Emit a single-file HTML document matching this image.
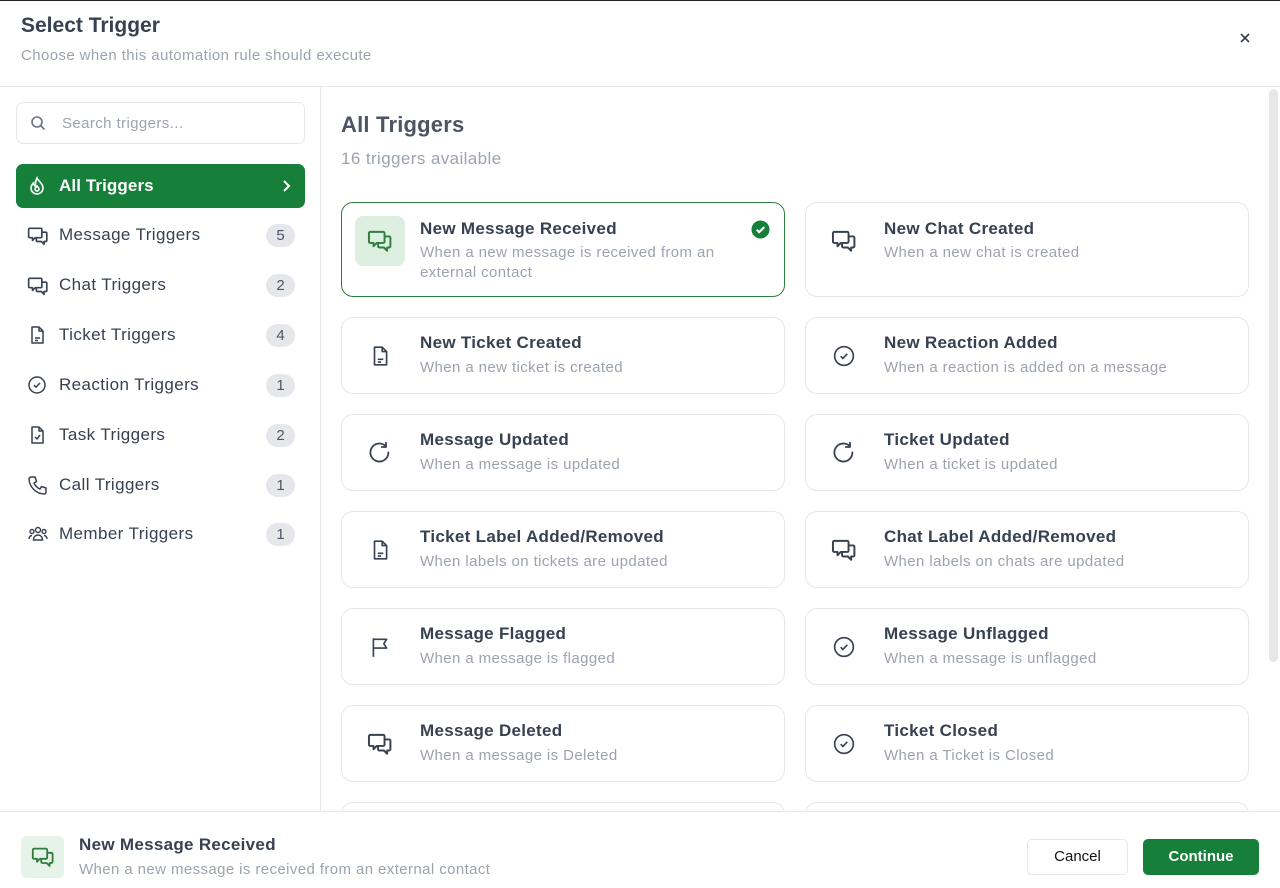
<!DOCTYPE html>
<html><head><meta charset="utf-8"><style>
*{box-sizing:border-box;margin:0;padding:0}
body{width:1280px;height:887px;overflow:hidden;background:#fff;font-family:"Liberation Sans",sans-serif;color:#374151;position:relative;border-top:1px solid #222;letter-spacing:0.4px}
.hdr{position:absolute;left:0;top:1px;width:1280px;height:85px;border-bottom:1px solid #e5e7eb}
.hdr h1{position:absolute;left:21px;top:12px;font-size:21px;font-weight:600;color:#374151;letter-spacing:0}
.hdr p{position:absolute;left:21px;top:45px;font-size:15px;color:#9ca3af}
.x{position:absolute;left:1238px;top:29px}
.side{position:absolute;left:0;top:86px;width:321px;height:724px;border-right:1px solid #e5e7eb}
.search{position:absolute;left:16px;top:15px;width:289px;height:42px;border:1px solid #e5e7eb;border-radius:7px}
.search span{position:absolute;left:45px;top:12px;font-size:15px;color:#9ca3af}
.search svg{position:absolute;left:13px;top:12px}
.item{position:absolute;left:16px;width:289px;height:44px;border-radius:7px;font-size:17px;color:#374151}
.item svg{position:absolute;left:11px;top:12px}
.item .t{position:absolute;left:43px;top:12px}
.item .b{position:absolute;right:10px;top:11px;width:29px;height:23px;border-radius:12px;background:#e5e7eb;text-align:center;font-size:15px;line-height:23px;color:#4b5563;letter-spacing:0}
.item.act{background:#16803a;color:#fff;font-weight:700;letter-spacing:0.1px}
.main{position:absolute;left:321px;top:86px;width:959px;height:724px;overflow:hidden}
.main h2{position:absolute;left:20px;top:25px;font-size:22px;font-weight:600;color:#4b5563;letter-spacing:0.2px}
.main .cnt{position:absolute;left:20px;top:62px;font-size:17px;color:#9ca3af}
.card{position:absolute;width:444px;border:1px solid #e5e7eb;border-radius:12px;background:#fff}
.card .ic{position:absolute;left:13px;width:50px;height:50px;display:flex;align-items:center;justify-content:center;border-radius:8px}
.card .tt{position:absolute;left:78px;font-size:17px;font-weight:600;color:#374151;letter-spacing:0.3px}
.card .dd{position:absolute;left:78px;font-size:15px;color:#9ca3af;line-height:20px;width:330px}
.sel{border-color:#2f7d3f}
.sel .ic{background:#dcefe1}
.scroll{position:absolute;left:1269px;top:88px;width:9px;height:573px;background:#e5e7eb;border-radius:5px}
.foot{position:absolute;left:0;top:810px;width:1280px;height:77px;border-top:1px solid #e5e7eb;background:#fff}
.foot .ic{position:absolute;left:21px;top:24px;width:43px;height:42px;border-radius:6px;background:#e6f3e9;display:flex;align-items:center;justify-content:center}
.foot .a{position:absolute;left:79px;top:23px;font-size:17px;font-weight:600;color:#374151;letter-spacing:0.3px}
.foot .b2{position:absolute;left:79px;top:49px;font-size:15px;color:#9ca3af}
.btn{position:absolute;top:27px;height:36px;border-radius:5px;font-size:15px;text-align:center;line-height:34px;letter-spacing:0}
.cancel{left:1027px;width:101px;border:1px solid #e5e7eb;color:#111}
.cont{left:1143px;width:116px;background:#16803a;color:#fff;font-weight:600;border:1px solid #16803a}
</style></head><body>
<div class="hdr"><h1>Select Trigger</h1><p>Choose when this automation rule should execute</p>
<svg class="x" width="14" height="14" viewBox="0 0 14 14"><path d="M3 3l8 8M11 3l-8 8" stroke="#374151" stroke-width="1.6"/></svg></div>

<div class="side">
<div class="search"><svg width="16" height="16" viewBox="0 0 16 16" fill="none" stroke="#6b7280" stroke-width="1.6"><circle cx="7" cy="7" r="5"/><path d="M11 11l3.5 3.5"/></svg><span>Search triggers...</span></div>
<div class="item act" style="top:77px"><svg width="20" height="20" viewBox="0 0 20 20" fill="none" stroke="#fff" stroke-width="1.6"><path d="M10 2c1 3 6 5 6 10a6 6 0 0 1-12 0c0-2.5 1.5-4 2.5-5 0 2 1 3 2 3C8 7 9 4 10 2z"/><path d="M10 15a2 2 0 0 1-2-2c0-1 1-2 2-3 .5 1 2 1.5 2 3a2 2 0 0 1-2 2z"/></svg><span class="t">All Triggers</span><svg style="left:auto;right:14px;top:15px" width="10" height="14" viewBox="0 0 10 14" fill="none" stroke="#fff" stroke-width="2"><path d="M3 2l5 5-5 5"/></svg></div>
<div class="item" style="top:126px"><svg width="22" height="22" viewBox="0 0 20 20" fill="none" stroke="#374151" stroke-width="1.5" stroke-linejoin="round"><path d="M2.5 3h10a1 1 0 0 1 1 1v6.5a1 1 0 0 1-1 1H7.5L5 14v-2.5H2.5a1 1 0 0 1-1-1V4a1 1 0 0 1 1-1z"/><path d="M13.5 6.5h3.5a1 1 0 0 1 1 1V14a1 1 0 0 1-1 1h-1.5v2.5L13 15H9.5a1 1 0 0 1-1-1v-2.5"/></svg><span class="t">Message Triggers</span><span class="b">5</span></div>
<div class="item" style="top:176px"><svg width="22" height="22" viewBox="0 0 20 20" fill="none" stroke="#374151" stroke-width="1.5" stroke-linejoin="round"><path d="M2.5 3h10a1 1 0 0 1 1 1v6.5a1 1 0 0 1-1 1H7.5L5 14v-2.5H2.5a1 1 0 0 1-1-1V4a1 1 0 0 1 1-1z"/><path d="M13.5 6.5h3.5a1 1 0 0 1 1 1V14a1 1 0 0 1-1 1h-1.5v2.5L13 15H9.5a1 1 0 0 1-1-1v-2.5"/></svg><span class="t">Chat Triggers</span><span class="b">2</span></div>
<div class="item" style="top:226px"><svg width="20" height="20" viewBox="0 0 20 20" fill="none" stroke="#374151" stroke-width="1.5" stroke-linejoin="round"><path d="M5 2h7l4 4v12H5z"/><path d="M12 2v4h4M8 13h5M8 15.5h3"/></svg><span class="t">Ticket Triggers</span><span class="b">4</span></div>
<div class="item" style="top:276px"><svg width="20" height="20" viewBox="0 0 20 20" fill="none" stroke="#374151" stroke-width="1.5"><circle cx="10" cy="10" r="8"/><path d="M7 10.2l2 2 4-4.2"/></svg><span class="t">Reaction Triggers</span><span class="b">1</span></div>
<div class="item" style="top:326px"><svg width="20" height="20" viewBox="0 0 20 20" fill="none" stroke="#374151" stroke-width="1.5" stroke-linejoin="round"><path d="M5 2h7l4 4v12H5z"/><path d="M12 2v4h4M8 12l2 2 3-4"/></svg><span class="t">Task Triggers</span><span class="b">2</span></div>
<div class="item" style="top:376px"><svg width="22" height="22" viewBox="0 0 22 22" fill="none" stroke="#374151" stroke-width="1.5" stroke-linejoin="round"><path d="M4 2h4l1.5 4.5-2.5 1.5a11 11 0 0 0 6 6l1.5-2.5L19 13v4a2 2 0 0 1-2 2A16 16 0 0 1 2 4a2 2 0 0 1 2-2z"/></svg><span class="t">Call Triggers</span><span class="b">1</span></div>
<div class="item" style="top:425px"><svg width="22" height="20" viewBox="0 0 22 20" fill="none" stroke="#374151" stroke-width="1.4"><circle cx="11" cy="6" r="2.5"/><circle cx="5" cy="7.5" r="2"/><circle cx="17" cy="7.5" r="2"/><path d="M6.5 16c0-3 2-5 4.5-5s4.5 2 4.5 5zM2 15c0-2 1.3-3.5 3-3.5M20 15c0-2-1.3-3.5-3-3.5"/></svg><span class="t">Member Triggers</span><span class="b">1</span></div>
</div>

<div class="main">
<h2>All Triggers</h2><div class="cnt">16 triggers available</div>
</div>
<div class="scroll"></div>

<div style="position:absolute;left:0;top:0;width:1280px;height:810px;overflow:hidden;pointer-events:none">
<div class="card sel" style="left:341px;top:201px;height:95px"><div class="ic" style="top:13px"><svg width="26" height="26" viewBox="0 0 20 20" fill="none" stroke="#2f7d3f" stroke-width="1.5" stroke-linejoin="round"><path d="M2.5 3h10a1 1 0 0 1 1 1v6.5a1 1 0 0 1-1 1H7.5L5 14v-2.5H2.5a1 1 0 0 1-1-1V4a1 1 0 0 1 1-1z"/><path d="M13.5 6.5h3.5a1 1 0 0 1 1 1V14a1 1 0 0 1-1 1h-1.5v2.5L13 15H9.5a1 1 0 0 1-1-1v-2.5"/></svg></div><div class="tt" style="top:16px">New Message Received</div><div class="dd" style="top:40px">When a new message is received from an external contact</div>
<svg style="position:absolute;left:409px;top:17px" width="19" height="19" viewBox="0 0 20 20"><circle cx="10" cy="10" r="9.5" fill="#16803a"/><path d="M6 10.3l2.6 2.5L14 7.5" stroke="#fff" stroke-width="2.2" fill="none"/></svg></div>

<div class="card" style="left:805px;top:201px;height:95px"><div class="ic" style="top:13px"><svg width="26" height="26" viewBox="0 0 20 20" fill="none" stroke="#374151" stroke-width="1.5" stroke-linejoin="round"><path d="M2.5 3h10a1 1 0 0 1 1 1v6.5a1 1 0 0 1-1 1H7.5L5 14v-2.5H2.5a1 1 0 0 1-1-1V4a1 1 0 0 1 1-1z"/><path d="M13.5 6.5h3.5a1 1 0 0 1 1 1V14a1 1 0 0 1-1 1h-1.5v2.5L13 15H9.5a1 1 0 0 1-1-1v-2.5"/></svg></div><div class="tt" style="top:16px">New Chat Created</div><div class="dd" style="top:40px">When a new chat is created</div></div>

<div class="card" style="left:341px;top:316px;height:77px"><div class="ic" style="top:13px"><svg width="22" height="22" viewBox="0 0 20 20" fill="none" stroke="#374151" stroke-width="1.5" stroke-linejoin="round"><path d="M5 2h7l4 4v12H5z"/><path d="M12 2v4h4M8 13h5M8 15.5h3"/></svg></div><div class="tt" style="top:15px">New Ticket Created</div><div class="dd" style="top:40px">When a new ticket is created</div></div>
<div class="card" style="left:805px;top:316px;height:77px"><div class="ic" style="top:13px"><svg width="22" height="22" viewBox="0 0 20 20" fill="none" stroke="#374151" stroke-width="1.5"><circle cx="10" cy="10" r="8.5"/><path d="M7 10.2l2 2 4-4.2"/></svg></div><div class="tt" style="top:15px">New Reaction Added</div><div class="dd" style="top:40px">When a reaction is added on a message</div></div>

<div class="card" style="left:341px;top:413px;height:77px"><div class="ic" style="top:13px"><svg width="24" height="24" viewBox="0 0 20 20" fill="none" stroke="#374151" stroke-width="1.5" stroke-linecap="round"><path d="M17 9.5A7.5 7.5 0 1 1 14.5 4"/><path d="M15 1.5V5h-3.5" stroke-linejoin="round"/></svg></div><div class="tt" style="top:15px">Message Updated</div><div class="dd" style="top:40px">When a message is updated</div></div>
<div class="card" style="left:805px;top:413px;height:77px"><div class="ic" style="top:13px"><svg width="24" height="24" viewBox="0 0 20 20" fill="none" stroke="#374151" stroke-width="1.5" stroke-linecap="round"><path d="M17 9.5A7.5 7.5 0 1 1 14.5 4"/><path d="M15 1.5V5h-3.5" stroke-linejoin="round"/></svg></div><div class="tt" style="top:15px">Ticket Updated</div><div class="dd" style="top:40px">When a ticket is updated</div></div>

<div class="card" style="left:341px;top:510px;height:77px"><div class="ic" style="top:13px"><svg width="22" height="22" viewBox="0 0 20 20" fill="none" stroke="#374151" stroke-width="1.5" stroke-linejoin="round"><path d="M5 2h7l4 4v12H5z"/><path d="M12 2v4h4M8 13h5M8 15.5h3"/></svg></div><div class="tt" style="top:15px">Ticket Label Added/Removed</div><div class="dd" style="top:40px">When labels on tickets are updated</div></div>
<div class="card" style="left:805px;top:510px;height:77px"><div class="ic" style="top:13px"><svg width="26" height="26" viewBox="0 0 20 20" fill="none" stroke="#374151" stroke-width="1.5" stroke-linejoin="round"><path d="M2.5 3h10a1 1 0 0 1 1 1v6.5a1 1 0 0 1-1 1H7.5L5 14v-2.5H2.5a1 1 0 0 1-1-1V4a1 1 0 0 1 1-1z"/><path d="M13.5 6.5h3.5a1 1 0 0 1 1 1V14a1 1 0 0 1-1 1h-1.5v2.5L13 15H9.5a1 1 0 0 1-1-1v-2.5"/></svg></div><div class="tt" style="top:15px">Chat Label Added/Removed</div><div class="dd" style="top:40px">When labels on chats are updated</div></div>

<div class="card" style="left:341px;top:607px;height:77px"><div class="ic" style="top:13px"><svg width="22" height="22" viewBox="0 0 20 20" fill="none" stroke="#374151" stroke-width="1.5" stroke-linejoin="round"><path d="M4 19V2M4 3h12l-2.5 4L16 11H4"/></svg></div><div class="tt" style="top:15px">Message Flagged</div><div class="dd" style="top:40px">When a message is flagged</div></div>
<div class="card" style="left:805px;top:607px;height:77px"><div class="ic" style="top:13px"><svg width="22" height="22" viewBox="0 0 20 20" fill="none" stroke="#374151" stroke-width="1.5"><circle cx="10" cy="10" r="8.5"/><path d="M7 10.2l2 2 4-4.2"/></svg></div><div class="tt" style="top:15px">Message Unflagged</div><div class="dd" style="top:40px">When a message is unflagged</div></div>

<div class="card" style="left:341px;top:704px;height:77px"><div class="ic" style="top:13px"><svg width="26" height="26" viewBox="0 0 20 20" fill="none" stroke="#374151" stroke-width="1.5" stroke-linejoin="round"><path d="M2.5 3h10a1 1 0 0 1 1 1v6.5a1 1 0 0 1-1 1H7.5L5 14v-2.5H2.5a1 1 0 0 1-1-1V4a1 1 0 0 1 1-1z"/><path d="M13.5 6.5h3.5a1 1 0 0 1 1 1V14a1 1 0 0 1-1 1h-1.5v2.5L13 15H9.5a1 1 0 0 1-1-1v-2.5"/></svg></div><div class="tt" style="top:15px">Message Deleted</div><div class="dd" style="top:40px">When a message is Deleted</div></div>
<div class="card" style="left:805px;top:704px;height:77px"><div class="ic" style="top:13px"><svg width="22" height="22" viewBox="0 0 20 20" fill="none" stroke="#374151" stroke-width="1.5"><circle cx="10" cy="10" r="8.5"/><path d="M7 10.2l2 2 4-4.2"/></svg></div><div class="tt" style="top:15px">Ticket Closed</div><div class="dd" style="top:40px">When a Ticket is Closed</div></div>

<div class="card" style="left:341px;top:801px;height:77px"></div>
<div class="card" style="left:805px;top:801px;height:77px"></div>
</div>

<div class="foot">
<div class="ic"><svg width="24" height="24" viewBox="0 0 20 20" fill="none" stroke="#2f7d3f" stroke-width="1.5" stroke-linejoin="round"><path d="M2.5 3h10a1 1 0 0 1 1 1v6.5a1 1 0 0 1-1 1H7.5L5 14v-2.5H2.5a1 1 0 0 1-1-1V4a1 1 0 0 1 1-1z"/><path d="M13.5 6.5h3.5a1 1 0 0 1 1 1V14a1 1 0 0 1-1 1h-1.5v2.5L13 15H9.5a1 1 0 0 1-1-1v-2.5"/></svg></div>
<div class="a">New Message Received</div><div class="b2">When a new message is received from an external contact</div>
<div class="btn cancel">Cancel</div><div class="btn cont">Continue</div>
</div>
</body></html>
